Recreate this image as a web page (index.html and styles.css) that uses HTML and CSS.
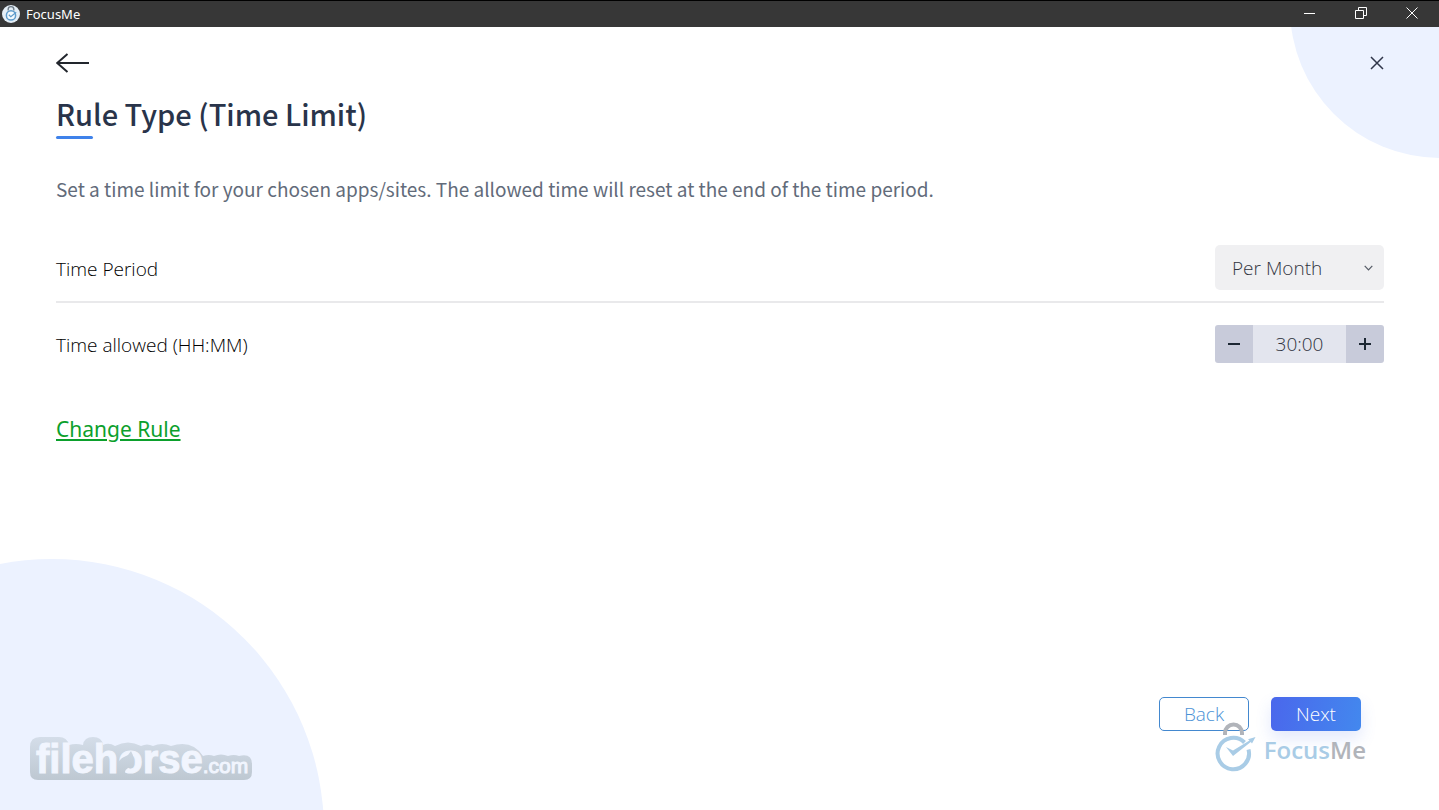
FILE: index.html
```html
<!DOCTYPE html>
<html lang="en">
<head>
  <meta charset="UTF-8">
  <meta name="viewport" content="width=device-width, initial-scale=1.0">
  <title>FocusMe</title>
  <link rel="stylesheet" href="styles.css">
</head>
<body>
  <header class="title-bar">
    <svg class="app-icon" viewBox="0 0 18 18" aria-hidden="true">
      <circle cx="9" cy="9" r="9" fill="#e4eef6"/>
      <path d="M6.2 5.6V4.2a2.8 2.6 0 0 1 5.6 0v1.4" fill="none" stroke="#6f7c88" stroke-width="1.4"/>
      <circle cx="9" cy="10.4" r="4.6" fill="#f3f9fd" stroke="#5f9ccb" stroke-width="1.5"/>
      <path d="M6.8 9.8l2 1.8 5.4-4.4" fill="none" stroke="#5f9ccb" stroke-width="1.2"/>
    </svg>
    <span class="app-name">FocusMe</span>
    <div class="window-buttons">
      <button type="button" aria-label="Minimize">
        <svg viewBox="0 0 12 12"><path d="M0 6.5h11"/></svg>
      </button>
      <button type="button" aria-label="Restore">
        <svg viewBox="0 0 12 12"><path d="M.5 3.5h8v8h-8zM3.5 3.5v-3h8v8h-3"/></svg>
      </button>
      <button type="button" aria-label="Close window">
        <svg viewBox="0 0 12 12"><path d="M.5 .5l11 11M11.5 .5l-11 11"/></svg>
      </button>
    </div>
  </header>

  <main class="page">
    <div class="circle circle-top"></div>
    <div class="circle circle-bottom"></div>

    <!-- Top navigation -->
    <div class="page-nav">
      <button type="button" class="icon-button" aria-label="Go back">
        <svg width="33" height="20" viewBox="0 0 33 20"><path d="M11.500 1L1.200 10l10.300 9M1.200 10H33" fill="none" stroke="#22262d" stroke-width="2"/></svg>
      </button>
      <button type="button" class="icon-button" aria-label="Close">
        <svg width="14" height="14" viewBox="0 0 14 14"><path d="M1 1l12 12M13 1L1 13" fill="none" stroke="#30364a" stroke-width="1.500"/></svg>
      </button>
    </div>

    <h1>Rule Type (Time Limit)</h1>
    <p class="description">Set a time limit for your chosen apps/sites. The allowed time will reset at the end of the time period.</p>

    <!-- Settings -->
    <form class="settings">
      <div class="row row-period">
        <label for="period">Time Period</label>
        <div class="select">
          <select id="period">
            <option>Per Day</option>
            <option>Per Week</option>
            <option selected>Per Month</option>
          </select>
          <svg width="9" height="6" viewBox="0 0 9 6" aria-hidden="true"><path d="M.7 .8l3.800 4L8.300 .8" fill="none" stroke="#555b66" stroke-width="1.200"/></svg>
        </div>
      </div>
      <div class="row">
        <label for="allowed">Time allowed (HH:MM)</label>
        <div class="stepper">
          <button type="button" aria-label="Less time">
            <svg width="12" height="12" viewBox="0 0 12 12"><path d="M0 6h12"/></svg>
          </button>
          <input type="text" id="allowed" value="30:00">
          <button type="button" aria-label="More time">
            <svg width="12" height="12" viewBox="0 0 12 12"><path d="M0 6h12M6 0v12"/></svg>
          </button>
        </div>
      </div>
    </form>
    <a href="#" class="change-rule">Change Rule</a>

    <div class="actions">
      <button type="button" class="btn btn-back">Back</button>
      <button type="button" class="btn btn-next">Next</button>
    </div>

    <!-- Logos over the page -->
    <div class="brand">
      <svg width="41" height="50" viewBox="0 0 41 50" aria-hidden="true">
        <path d="M10 13V11a8.500 8.500 0 0 1 17 0v2" fill="none" stroke="#b1b4ba" stroke-width="4"/>
        <path d="M33.500 27.500A15.700 15.700 0 1 1 29.500 20.500" fill="none" stroke="#a9cce6" stroke-width="4"/>
        <path d="M11 25l7 3.500L34.500 18.500 33 17.300 40.500 15l-3.500 6.500-1.200-1.500L18 34z" fill="#a9cce6"/>
      </svg>
      <span>Focus<b>Me</b></span>
    </div>
    <svg class="filehorse" width="224" height="46" viewBox="0 0 224 46">
      <defs>
        <linearGradient id="shade" gradientUnits="userSpaceOnUse" x1="0" y1="0" x2="0" y2="46">
          <stop offset="0" stop-color="#d5deea"/>
          <stop offset="1" stop-color="#bdc7d1"/>
        </linearGradient>
      </defs>
      <path d="M0 12Q0 2 10 2H29Q37 2 39 10Q46 8 53 10Q54 2 63 2Q72 2 73 10Q79 7 85 11Q98 4 111 11Q117 8 123 11Q132 7 141 11Q162 4 173 21Q179 19 184 21Q191 18 198 21Q204 19 209 21Q222 18 222 29V37Q222 45 214 45H8Q0 45 0 37z" fill="url(#shade)"/>
      <text x="6" y="38" class="wordmark">filehorse<tspan class="domain">.com</tspan></text>
      <!-- Horse head cut out of the "o" -->
      <path d="M101 16l-3 4-6 3-5 5v12h9q-3-4 2-7 9-7 3-17z" fill="url(#shade)"/>
    </svg>
  </main>
</body>
</html>
```

FILE: styles.css
```css
* {
  box-sizing: border-box;
}

body {
  margin: 0;
  min-height: 100vh;
  display: flex;
  flex-direction: column;
  font-family: "Open Sans", sans-serif;
  background-color: #ffffff;
}

button,
input,
select {
  font-family: inherit;
  border: none;
  padding: 0;
  cursor: pointer;
}

/* Window title bar */
.title-bar {
  display: flex;
  align-items: center;
  height: 27px;
  padding: 0 2px;
  border-top: 1px solid #000000;
  background-color: #373737;
  color: #ffffff;
}

.app-icon {
  width: 18px;
  height: 18px;
}

.app-name {
  margin-left: 6px;
  font-family: "Noto Sans", sans-serif;
  font-size: 13px;
}

.window-buttons {
  margin-left: auto;
  display: flex;
}

.window-buttons button {
  width: 51px;
  height: 24px;
  background: none;
}

.window-buttons svg {
  width: 12px;
  height: 12px;
  fill: none;
  stroke: #ffffff;
}

/* Page */
.page {
  flex: 1;
  display: flex;
  flex-direction: column;
  position: relative;
  overflow: hidden;
  padding: 24px 55px 79px 56px;
}

.page > * {
  z-index: 1;
}

.circle {
  position: absolute;
  z-index: 0;
  border-radius: 50%;
  background-color: #ecf2ff;
}

.circle-top {
  top: -169px;
  right: -151px;
  width: 300px;
  height: 300px;
}

.circle-bottom {
  left: -220px;
  bottom: -293px;
  width: 544px;
  height: 544px;
}

.page-nav {
  display: flex;
  justify-content: space-between;
  align-items: center;
  height: 24px;
}

.icon-button {
  display: flex;
  background: none;
}

h1 {
  margin: 16px 0 0;
  font-family: "Noto Sans CJK SC", sans-serif;
  font-size: 29px;
  font-weight: 500;
  line-height: 45px;
  color: #29344a;
}

h1::after {
  content: "";
  display: block;
  width: 37px;
  height: 3px;
  border-radius: 2px;
  background-color: #3f82ea;
}

.description {
  margin: 35px 0 0;
  font-family: "Noto Sans CJK SC", sans-serif;
  font-size: 19px;
  line-height: 30px;
  color: #626b7a;
}

.settings {
  margin-top: 41px;
}

.row {
  display: flex;
  justify-content: space-between;
  align-items: center;
  padding-top: 22px;
}

.row-period {
  padding: 0 0 11px;
  border-bottom: 2px solid #e9e9eb;
}

.row label {
  padding-top: 2px;
  font-size: 19px;
  font-weight: 300;
  color: #000000;
}

.select {
  display: grid;
  align-items: center;
  width: 169px;
}

.select select,
.select svg {
  grid-area: 1 / 1;
}

.select select {
  appearance: none;
  height: 45px;
  padding-left: 17px;
  border-radius: 5px;
  background-color: #f0f0f2;
  font-size: 19px;
  font-weight: 300;
  color: #30343e;
}

.select svg {
  justify-self: end;
  margin-right: 11px;
  pointer-events: none;
}

.stepper {
  display: flex;
  width: 169px;
  height: 38px;
  border-radius: 3px;
  overflow: hidden;
}

.stepper button {
  display: flex;
  align-items: center;
  justify-content: center;
  width: 38px;
  background-color: #c8cbda;
}

.stepper path {
  stroke: #1c2733;
  stroke-width: 2;
}

.stepper input {
  flex: 1;
  min-width: 0;
  background-color: #e3e5ee;
  font-size: 19px;
  font-weight: 300;
  text-align: center;
  color: #30343e;
}

.change-rule {
  align-self: flex-start;
  margin-top: 50px;
  font-family: "Noto Sans", sans-serif;
  font-size: 21px;
  line-height: 32px;
  color: #0ba02c;
}

/* Bottom buttons */
.actions {
  display: flex;
  justify-content: flex-end;
  gap: 22px;
  margin-top: auto;
  padding-right: 23px;
}

.btn {
  width: 90px;
  height: 34px;
  border-radius: 5px;
  font-size: 19px;
  font-weight: 300;
}

.btn-back {
  border: 1px solid #4388cf;
  background-color: #ffffff;
  color: #4b92d6;
}

.btn-next {
  background: linear-gradient(100deg, #4a67ec, #4388ee);
  box-shadow: 0 8px 16px rgba(70, 110, 235, 0.15);
  color: #ffffff;
}

/* Logos */
.brand {
  position: absolute;
  right: 73px;
  bottom: 38px;
  display: flex;
  align-items: center;
  gap: 8px;
  font-size: 24px;
  font-weight: 600;
  color: #a9cce6;
}

.brand span {
  padding-top: 4px;
}

.brand b {
  font-weight: 600;
  color: #b1b4ba;
}

.filehorse {
  position: absolute;
  left: 30px;
  bottom: 29px;
}

.wordmark {
  font-family: "Liberation Sans", sans-serif;
  font-size: 40px;
  font-weight: bold;
  fill: #f1f5fe;
  stroke: #f1f5fe;
  stroke-width: 1px;
}

.domain {
  font-size: 21px;
  font-weight: normal;
}
```
